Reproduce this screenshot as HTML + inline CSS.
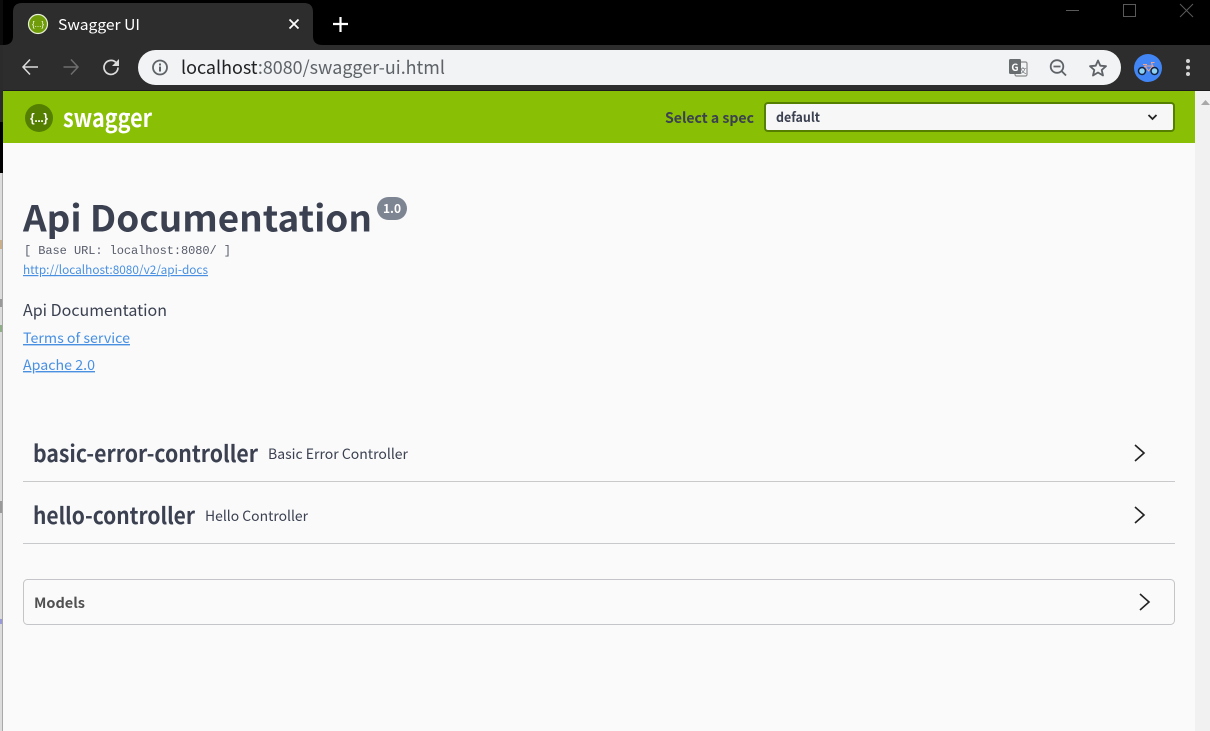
<!DOCTYPE html>
<html><head><meta charset="utf-8"><title>Swagger UI</title>
<style>html,body{margin:0;padding:0;width:1210px;height:731px;overflow:hidden;background:#fafafa}svg{display:block}text{white-space:pre}</style></head>
<body>
<svg xmlns="http://www.w3.org/2000/svg" width="1210" height="731" viewBox="0 0 1210 731" font-family="'Noto Sans CJK SC','Liberation Sans',sans-serif">
<rect width="1210" height="731" fill="#fafafa"/>
<!-- chrome -->
<rect width="1210" height="45" fill="#000"/>
<rect x="0" y="45" width="1210" height="45" fill="#2d2d2d"/>
<rect x="0" y="90" width="1210" height="1" fill="#1c1c1c"/>
<path d="M3 45C10 45 13 42 13 36V12C13 6 16 3 22 3H304C310 3 313 6 313 12V36C313 42 316 45 323 45Z" fill="#2d2d2d"/>
<circle cx="38" cy="24" r="9.500" fill="#6f9c08" stroke="#e8f0d8" stroke-width="1.200"/>
<text x="38" y="27" font-size="8" fill="#fff" text-anchor="middle" font-family="'Liberation Sans',sans-serif" textLength="12" lengthAdjust="spacing">{...}</text>
<text x="58" y="30" font-size="15" fill="#fff" textLength="82" lengthAdjust="spacingAndGlyphs">Swagger UI</text>
<path d="M289.500 19.500l9 9M298.500 19.500l-9 9" stroke="#fff" stroke-width="1.800"/>
<path d="M340.500 17v15M333 24h15" stroke="#fff" stroke-width="2.200"/>
<path d="M38 67H23.500M30 59.500L23 67l7 7.500" fill="none" stroke="#dcdcdc" stroke-width="1.500"/>
<path d="M78 67H63.500M71 59.500l7 7.500-7 7.500" fill="none" stroke="#6e6e6e" stroke-width="1.500"/>
<path d="M118 67.500a7 7 0 1 1-2.200-5.200" fill="none" stroke="#dcdcdc" stroke-width="1.700"/>
<path d="M119 59v7h-7z" fill="#dcdcdc"/>
<rect x="138" y="50" width="983" height="35" rx="17.500" fill="#f1f3f4"/>
<circle cx="160" cy="67.500" r="7" fill="none" stroke="#5f6368" stroke-width="1.800"/>
<rect x="159" y="66.500" width="2" height="5" fill="#5f6368"/><rect x="159" y="63.500" width="2" height="2" fill="#5f6368"/>
<text x="181" y="74" font-size="18" fill="#202124" textLength="264" lengthAdjust="spacingAndGlyphs">localhost<tspan fill="#5f6368">:8080/swagger-ui.html</tspan></text>
<!-- translate -->
<rect x="1015" y="62" width="12" height="14" rx="1.500" fill="#f1f3f4" stroke="#8a8a8a" stroke-width="1.200"/>
<rect x="1009" y="59" width="12" height="15" rx="1.500" fill="#6a6d70"/>
<text x="1015" y="71" font-size="10" font-weight="bold" fill="#fff" text-anchor="middle">G</text>
<text x="1023" y="73" font-size="7" fill="#5f6368" text-anchor="middle">文</text>
<!-- zoom -->
<circle cx="1057" cy="66.500" r="6.300" fill="none" stroke="#5f6368" stroke-width="1.800"/>
<path d="M1053.500 66.500h7M1061.500 71l4.500 4.500" stroke="#5f6368" stroke-width="1.800" fill="none"/>
<!-- star -->
<path d="M1098 60.500l2.300 5.200 5.700.5-4.300 3.800 1.300 5.500-5-3-5 3 1.300-5.500-4.300-3.800 5.700-.5z" fill="none" stroke="#5f6368" stroke-width="1.800" stroke-linejoin="round"/>
<!-- avatar -->
<circle cx="1148" cy="68" r="14" fill="#4285f4"/>
<path d="M1142 71l3-5h8l2 5M1145 66l3.500 5 4.500-5M1152.500 66l-1-3.500h3M1143 64.500h4" fill="none" stroke="#f0a58c" stroke-width="1"/>
<circle cx="1142" cy="71" r="3.500" fill="#8fd3f4" stroke="#13233f" stroke-width="1.500"/>
<circle cx="1154.500" cy="71" r="3.500" fill="#8fd3f4" stroke="#13233f" stroke-width="1.500"/>
<!-- menu -->
<circle cx="1188" cy="61" r="2" fill="#d5d5d5"/><circle cx="1188" cy="67.500" r="2" fill="#d5d5d5"/><circle cx="1188" cy="74" r="2" fill="#d5d5d5"/>
<!-- window controls -->
<path d="M1066 10.500h13" stroke="#5a5a5a" stroke-width="1"/>
<rect x="1123.500" y="4.500" width="12" height="12" fill="none" stroke="#5a5a5a" stroke-width="1"/>
<path d="M1180 4l13 13M1193 4l-13 13" stroke="#5a5a5a" stroke-width="1"/>
<!-- left strip -->
<rect x="0" y="0" width="3" height="45" fill="#0c0c0c"/>
<rect x="0" y="45" width="3" height="77" fill="#2b2b2b"/>
<rect x="0" y="122" width="3" height="51" fill="#000"/>
<rect x="0" y="173" width="3" height="558" fill="#dcdcdc"/>
<rect x="2" y="173" width="1" height="558" fill="#a9a9a9"/>
<rect x="0" y="240" width="2" height="9" fill="#cbb08c"/>
<rect x="0" y="299" width="2" height="8" fill="#999"/>
<rect x="0" y="325" width="2" height="7" fill="#8fae88"/>
<rect x="0" y="501" width="2" height="12" fill="#999"/>
<rect x="0" y="619" width="2" height="5" fill="#9a9ad8"/>
<!-- page -->
<rect x="3" y="91" width="1192" height="52" fill="#89bf04"/>
<rect x="1195" y="91" width="15" height="640" fill="#f1f1f1"/>
<path d="M1201 105l4.500-5 4.500 5z" fill="#a8a8a8"/>
<circle cx="39" cy="118" r="14" fill="#547f00"/>
<text x="39" y="122" font-size="12" font-weight="bold" fill="#fff" text-anchor="middle" font-family="'Liberation Sans',sans-serif" textLength="18" lengthAdjust="spacing">{...}</text>
<text x="63" y="127" font-size="25" font-weight="bold" fill="#fff" textLength="89" lengthAdjust="spacingAndGlyphs">swagger</text>
<text x="665" y="123" font-size="14.500" font-weight="bold" fill="#3b4151" textLength="89" lengthAdjust="spacingAndGlyphs">Select a spec</text>
<rect x="765" y="103" width="409" height="28" rx="3" fill="#f7f7f7" stroke="#547f00" stroke-width="2"/>
<text x="776" y="122" font-size="13" font-weight="bold" fill="#3b4151" textLength="44" lengthAdjust="spacingAndGlyphs">default</text>
<path d="M1148.500 115l4 4 4-4" fill="none" stroke="#222" stroke-width="1.800"/>
<text x="23" y="231.500" font-size="36" font-weight="bold" fill="#3b4151" textLength="349" lengthAdjust="spacingAndGlyphs">Api Documentation</text>
<rect x="377" y="197" width="30" height="23" rx="11.500" fill="#7d8492"/>
<text x="392" y="213" font-size="12" font-weight="bold" fill="#fff" text-anchor="middle">1.0</text>
<text x="24" y="254" font-size="12" font-family="'Liberation Mono',monospace" fill="#3b4151" fill-opacity=".85" textLength="207" lengthAdjust="spacing">[ Base URL: localhost:8080/ ]</text>
<text x="23" y="274" font-size="12" fill="#4990e2" textLength="185" lengthAdjust="spacingAndGlyphs" text-decoration="underline">http://localhost:8080/v2/api-docs</text>
<text x="23" y="316" font-size="16" fill="#3b4151" textLength="144" lengthAdjust="spacingAndGlyphs">Api Documentation</text>
<text x="23" y="343" font-size="14" fill="#4990e2" textLength="107" lengthAdjust="spacingAndGlyphs" text-decoration="underline">Terms of service</text>
<text x="23" y="370" font-size="14" fill="#4990e2" textLength="72" lengthAdjust="spacingAndGlyphs" text-decoration="underline">Apache 2.0</text>
<text x="33" y="462" font-size="23" font-weight="bold" fill="#3b4151" textLength="225" lengthAdjust="spacingAndGlyphs">basic-error-controller</text>
<text x="268" y="459" font-size="14" fill="#3b4151" textLength="140" lengthAdjust="spacingAndGlyphs">Basic Error Controller</text>
<rect x="23" y="481" width="1152" height="1" fill="#c8c9cb"/>
<path d="M1135 445l9 8-9 8" fill="none" stroke="#222" stroke-width="1.600"/>
<text x="33" y="524" font-size="23" font-weight="bold" fill="#3b4151" textLength="162" lengthAdjust="spacingAndGlyphs">hello-controller</text>
<text x="205" y="521" font-size="14" fill="#3b4151" textLength="103" lengthAdjust="spacingAndGlyphs">Hello Controller</text>
<rect x="23" y="543" width="1152" height="1" fill="#c8c9cb"/>
<path d="M1135 507l9 8-9 8" fill="none" stroke="#222" stroke-width="1.600"/>
<rect x="23.500" y="579.500" width="1151" height="45" rx="4" fill="#fafafa" stroke="#c4c5c8"/>
<text x="34" y="608" font-size="14" font-weight="bold" fill="#505050" textLength="51" lengthAdjust="spacingAndGlyphs">Models</text>
<path d="M1140 594l9 8-9 8" fill="none" stroke="#222" stroke-width="1.600"/>
</svg>
</body></html>
